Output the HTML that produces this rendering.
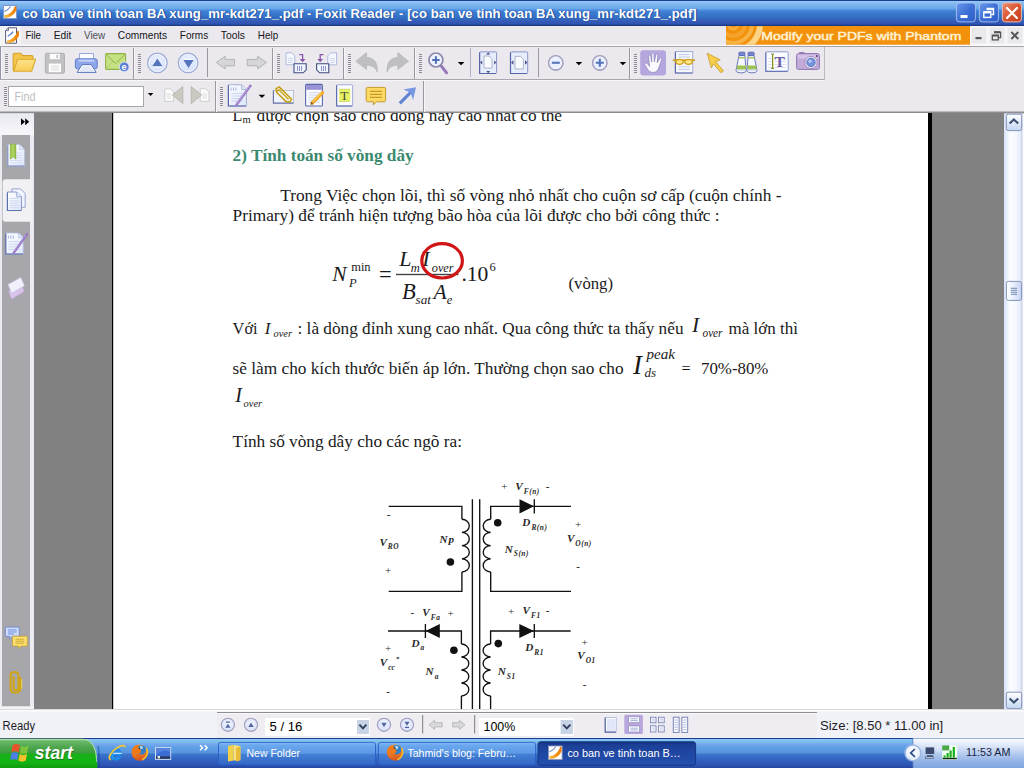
<!DOCTYPE html>
<html lang="vi">
<head>
<meta charset="utf-8">
<title>co ban ve tinh toan BA xung_mr-kdt271_.pdf - Foxit Reader</title>
<style>
html,body{margin:0;padding:0;}
body{width:1024px;height:768px;overflow:hidden;position:relative;background:#eceaee;font-family:"Liberation Sans",sans-serif;font-size:11px;color:#000;}
#root *{position:absolute;box-sizing:border-box;}
#root{position:absolute;left:0;top:0;width:1024px;height:768px;overflow:hidden;}
/* title bar */
#title{left:0;top:0;width:1024px;height:26px;background:linear-gradient(180deg,#16408c 0,#16408c 0.8px,#9cc8fc 1.3px,#88bcf0 3px,#76b2ea 6px,#6aa8ec 8.5px,#4e8ee0 10px,#3c7cd0 12px,#3674c8 16px,#3268be 19px,#3659b8 21.5px,#2c54b0 24px,#1c3c88 25.2px,#1c3c88 26px);}
/* menubar */
#menu{left:0;top:26px;width:1024px;height:20px;background:#ebe9ed;}
/* toolbars */
#tb1{left:0;top:46px;width:825px;height:34px;border-top:1px solid #a9a7ab;border-bottom:1px solid #a9a7ab;border-right:1px solid #bdbbbf;background:#ebe9ed;}
#tb2{left:0;top:80px;width:1024px;height:33px;background:#ebe9ed;}
/* doc */
#doc{left:0;top:113px;width:1024px;height:596px;background:#818181;overflow:hidden;}
#page{left:113px;top:0;width:815px;height:596px;background:#fff;}
</style>
</head>
<body>
<div id="root">

<!-- ===== TITLE BAR ===== -->
<div id="title">
</div>

<!-- ===== MENU BAR ===== -->
<div id="menu">
</div>

<!-- ===== TOOLBARS ===== -->
<div id="tb1"></div>
<div id="tb2"></div>

<!--CHROME-START-->
<svg id="chrome" style="left:0;top:0" width="1024" height="114" viewBox="0 0 1024 114">
<defs>
  <linearGradient id="gBtn" x1="0" y1="0" x2="1" y2="1"><stop offset="0" stop-color="#6a9aec"/><stop offset="0.5" stop-color="#3e70d6"/><stop offset="1" stop-color="#2c5cc6"/></linearGradient>
  <linearGradient id="gCls" x1="0" y1="0" x2="1" y2="1"><stop offset="0" stop-color="#ec8f74"/><stop offset="0.5" stop-color="#d9532f"/><stop offset="1" stop-color="#c03c1c"/></linearGradient>
  <radialGradient id="gCirc" cx="0.5" cy="0.4" r="0.6"><stop offset="0" stop-color="#eef3ff"/><stop offset="1" stop-color="#cfdcfa"/></radialGradient>
  <linearGradient id="gFold" x1="0" y1="0" x2="0" y2="1"><stop offset="0" stop-color="#fde28a"/><stop offset="1" stop-color="#f8cc58"/></linearGradient>
  <linearGradient id="gPg" x1="0" y1="0" x2="1" y2="1"><stop offset="0" stop-color="#ffffff"/><stop offset="1" stop-color="#dfe8fb"/></linearGradient>
  <linearGradient id="gOr" x1="0" y1="1" x2="1" y2="0"><stop offset="0" stop-color="#f6c050"/><stop offset="0.5" stop-color="#f09010"/><stop offset="1" stop-color="#e87808"/></linearGradient>
</defs>

<!-- title + menu text -->
<g font-family="'Liberation Sans',sans-serif">
  <text x="23.4" y="18.4" font-weight="bold" font-size="13" fill="#12307a" opacity="0.75" textLength="674.3" lengthAdjust="spacingAndGlyphs">co ban ve tinh toan BA xung_mr-kdt271_.pdf - Foxit Reader - [co ban ve tinh toan BA xung_mr-kdt271_.pdf]</text>
  <text x="22.5" y="17.5" font-weight="bold" font-size="13" fill="#fff" textLength="674.3" lengthAdjust="spacingAndGlyphs">co ban ve tinh toan BA xung_mr-kdt271_.pdf - Foxit Reader - [co ban ve tinh toan BA xung_mr-kdt271_.pdf]</text>
  <g font-size="11.5" fill="#15151c">
    <text x="25.4" y="38.8" textLength="15.6" lengthAdjust="spacingAndGlyphs">File</text>
    <text x="53.8" y="38.8" textLength="17.6" lengthAdjust="spacingAndGlyphs">Edit</text>
    <text x="84" y="38.8" textLength="21.2" lengthAdjust="spacingAndGlyphs" fill="#4c4c55">View</text>
    <text x="117.8" y="38.8" textLength="49.2" lengthAdjust="spacingAndGlyphs">Comments</text>
    <text x="179.8" y="38.8" textLength="28.4" lengthAdjust="spacingAndGlyphs">Forms</text>
    <text x="220.8" y="38.8" textLength="24.2" lengthAdjust="spacingAndGlyphs">Tools</text>
    <text x="257.8" y="38.8" textLength="20.4" lengthAdjust="spacingAndGlyphs">Help</text>
  </g>
</g>
<!-- title icon -->
<g>
  <rect x="3.5" y="5.5" width="13" height="13" fill="#fff" stroke="#7f97cf" stroke-width="1"/>
  <path d="M4.2 15 C8.8 15.2 13.2 11.4 14.8 6.2 L16.3 6.2 L16.3 10.6 C14 15.2 9.4 18.2 4.4 17.9 Z" fill="url(#gOr)"/>
  <path d="M4.2 11.5 C6.5 10.5 9 9 10.5 6.5" fill="none" stroke="#7890c8" stroke-width="1.2"/>
</g>
<!-- title buttons -->
<g>
  <rect x="956.4" y="2.9" width="19" height="19" rx="3" fill="url(#gBtn)" stroke="#b4caf4" stroke-opacity="0.8" stroke-width="1"/>
  <rect x="960.5" y="15" width="7" height="3" fill="#fff"/>
  <rect x="979.4" y="2.9" width="19" height="19" rx="3" fill="url(#gBtn)" stroke="#b4caf4" stroke-opacity="0.8" stroke-width="1"/>
  <path d="M986.5 8.5 H993.5 V14.5 H991.5 M986.5 9.5 H993.5" fill="none" stroke="#fff" stroke-width="1.4"/>
  <rect x="983.8" y="11.8" width="7" height="5.6" fill="#3a6cd8" stroke="#fff" stroke-width="1.4"/>
  <path d="M983.8 12.6 H990.8" stroke="#fff" stroke-width="1.6"/>
  <rect x="1002.4" y="2.9" width="19" height="19" rx="3" fill="url(#gCls)" stroke="#eab9aa" stroke-width="1"/>
  <path d="M1007 8 L1017 18 M1017 8 L1007 18" stroke="#fff" stroke-width="2.2" stroke-linecap="round"/>
</g>

<rect x="0" y="44.6" width="1024" height="1.6" fill="#fbfbfd"/>
<rect x="0" y="46" width="1024" height="1" fill="#a5a3a8"/>
<!-- menu icon -->
<g>
  <rect x="0" y="26" width="21" height="19" fill="#f4f3f6"/>
  <path d="M8.5 27.8 H16.5 V43.2 H5.6 V30.6 Z" fill="#fff" stroke="#565c78" stroke-width="1"/>
  <path d="M5.6 30.6 H8.5 V27.8" fill="none" stroke="#565c78" stroke-width="0.8"/>
  <path d="M6.8 40.4 C11.6 40.4 15.8 36.6 17.4 30.8 L18.9 31.2 L19 35.6 C17 40.6 12 43.6 7 43.3 Z" fill="url(#gOr)"/>
  <path d="M7.8 36.3 C9 34.5 11 35.5 13 31.6" fill="none" stroke="#5878c8" stroke-width="1.3"/>
</g>

<!-- banner -->
<g>
  <rect x="964" y="26" width="60" height="19" fill="#f6f6f8"/>
  <rect x="726" y="26" width="244" height="18.7" fill="#f2920c"/>
  <clipPath id="cpB"><rect x="726" y="26.3" width="40" height="18.4"/></clipPath>
  <g clip-path="url(#cpB)" fill="none">
    <circle cx="733" cy="24" r="27" stroke="#fbd98c" stroke-width="6" opacity="0.95"/>
    <circle cx="733" cy="24" r="19" stroke="#f7b64a" stroke-width="4" opacity="0.9"/>
    <circle cx="733" cy="24" r="12" stroke="#f5a530" stroke-width="4" opacity="0.9"/>
    <circle cx="733" cy="24" r="5" stroke="#f7b64a" stroke-width="3" opacity="0.8"/>
  </g>
  <text x="761.3" y="39.6" font-family="'Liberation Sans',sans-serif" font-size="10.6" fill="#fff1d2" stroke="#fff1d2" stroke-width="0.45" textLength="200" lengthAdjust="spacingAndGlyphs">Modify your PDFs with Phantom</text>
</g>
<!-- MDI buttons -->
<g>
  <rect x="971.5" y="27.5" width="15" height="16" fill="#e9e8eb"/>
  <rect x="989.5" y="27.5" width="15" height="16" fill="#e9e8eb"/>
  <rect x="1007.5" y="27.5" width="15" height="16" fill="#e9e8eb"/>
  <rect x="975.5" y="37" width="6" height="2.2" fill="#555"/>
  <path d="M994 32.6 H1000.6 V37.6 H999" fill="none" stroke="#555" stroke-width="1.3"/>
  <path d="M994 31.9 H1000.6" stroke="#555" stroke-width="1.6"/>
  <rect x="992.3" y="35.3" width="6" height="4.6" fill="#e9e8eb" stroke="#555" stroke-width="1.3"/>
  <path d="M992.3 35.6 H998.3" stroke="#555" stroke-width="1.8"/>
  <path d="M1011.3 32 L1018.3 39 M1018.3 32 L1011.3 39" stroke="#555" stroke-width="1.9"/>
</g>
<rect x="0" y="111.5" width="1024" height="1.6" fill="#8c8c8e"/>
<!-- ===== toolbar 1 icons ===== -->
<rect x="0" y="80" width="825" height="1" fill="#f8f8fa"/>
<rect x="0" y="47" width="1" height="32" fill="#9494a6"/>
<rect x="1" y="47" width="1" height="32" fill="#f8f8fa"/>
<g id="tb1i">
  <!-- grips -->
  <g fill="#8f8d93">
    <path d="M5 54h3v1h-3zM5 56h3v1h-3zM5 58h3v1h-3zM5 60h3v1h-3zM5 62h3v1h-3zM5 64h3v1h-3zM5 66h3v1h-3zM5 68h3v1h-3zM5 70h3v1h-3zM5 72h3v1h-3z"/>
    <path d="M138 54h3v1h-3zM138 56h3v1h-3zM138 58h3v1h-3zM138 60h3v1h-3zM138 62h3v1h-3zM138 64h3v1h-3zM138 66h3v1h-3zM138 68h3v1h-3zM138 70h3v1h-3zM138 72h3v1h-3z"/>
    <path d="M277 54h3v1h-3zM277 56h3v1h-3zM277 58h3v1h-3zM277 60h3v1h-3zM277 62h3v1h-3zM277 64h3v1h-3zM277 66h3v1h-3zM277 68h3v1h-3zM277 70h3v1h-3zM277 72h3v1h-3z"/>
    <path d="M348 54h3v1h-3zM348 56h3v1h-3zM348 58h3v1h-3zM348 60h3v1h-3zM348 62h3v1h-3zM348 64h3v1h-3zM348 66h3v1h-3zM348 68h3v1h-3zM348 70h3v1h-3zM348 72h3v1h-3z"/>
    <path d="M419 54h3v1h-3zM419 56h3v1h-3zM419 58h3v1h-3zM419 60h3v1h-3zM419 62h3v1h-3zM419 64h3v1h-3zM419 66h3v1h-3zM419 68h3v1h-3zM419 70h3v1h-3zM419 72h3v1h-3z"/>
    <path d="M634 54h3v1h-3zM634 56h3v1h-3zM634 58h3v1h-3zM634 60h3v1h-3zM634 62h3v1h-3zM634 64h3v1h-3zM634 66h3v1h-3zM634 68h3v1h-3zM634 70h3v1h-3zM634 72h3v1h-3z"/>
  </g>
  <!-- separators -->
  <g fill="#9a989e">
    <rect x="133" y="48" width="1" height="31"/>
    <rect x="207" y="48" width="1" height="29"/>
    <rect x="272" y="48" width="1" height="31"/>
    <rect x="343" y="48" width="1" height="31"/>
    <rect x="414" y="48" width="1" height="31"/>
    <rect x="538" y="48" width="1" height="29"/>
    <rect x="629" y="48" width="1" height="31"/>
  </g>
  <rect x="470" y="48" width="1" height="29" fill="#b4b0c8"/>
  <g fill="#f6f6f8">
    <rect x="134" y="48" width="1" height="31"/><rect x="273" y="48" width="1" height="31"/><rect x="344" y="48" width="1" height="31"/><rect x="415" y="48" width="1" height="31"/><rect x="630" y="48" width="1" height="31"/>
  </g>

  <!-- folder -->
  <path d="M13.2 70.5 V54.8 Q13.2 53.3 14.7 53.3 H20.6 L22.8 55.6 H31.5 Q33 55.6 33 57.1 V59.3" fill="#f5c64e" stroke="#d3a224" stroke-width="1.1"/>
  <path d="M13.6 71.3 L17.6 59.3 H35.6 L31.6 71.3 Z" fill="url(#gFold)" stroke="#d9a928" stroke-width="1.1" stroke-linejoin="round"/>
  <!-- floppy (disabled) -->
  <rect x="45.3" y="53.3" width="19.2" height="19.9" rx="1.5" fill="#c1c1c3" stroke="#b1b1b3" stroke-width="1"/>
  <rect x="49.8" y="53.8" width="10" height="5.4" fill="#fdfdfd"/>
  <rect x="56.3" y="54.8" width="1.8" height="3.4" fill="#c2c2c4"/>
  <rect x="48.8" y="63.6" width="12.2" height="8.6" fill="#fdfdfd"/>
  <path d="M51 66 H59 M51 68 H59 M51 70 H59" stroke="#d2d2d4" stroke-width="0.8"/>
  <!-- printer -->
  <rect x="79.6" y="53.6" width="13.8" height="6" fill="#fdfdff" stroke="#8e9fd6" stroke-width="0.9"/>
  <rect x="75.4" y="58.8" width="21.8" height="10" rx="2" fill="#8ea7ea" stroke="#607cc9" stroke-width="1"/>
  <rect x="78.5" y="59.6" width="15.6" height="2" fill="#c4d2f6"/>
  <path d="M82 64.6 H91.2 L96.2 72.4 H77.2 Z" fill="#fbfcff" stroke="#5a74c0" stroke-width="1"/>
  <path d="M82.2 67 H91 M81 69 H92.2 M80 71 H93.4" stroke="#b9c4e6" stroke-width="0.7"/>
  <!-- envelope -->
  <rect x="105.6" y="53.6" width="20" height="15.8" rx="1.2" fill="#c6e184" stroke="#8fb347" stroke-width="1.1"/>
  <path d="M106.2 54.4 L115.6 63.6 L125 54.4" fill="none" stroke="#8fb347" stroke-width="1"/>
  <path d="M106.2 68.8 L112.8 61.2 M125 68.8 L118.4 61.2" fill="none" stroke="#a6c864" stroke-width="0.8"/>
  <circle cx="124.2" cy="66.9" r="4.9" fill="#5b80d2" stroke="#e8eefc" stroke-width="0.8"/>
  <text x="121.6" y="69.6" font-family="'Liberation Sans',sans-serif" font-weight="bold" font-size="9" fill="#fff">e</text>

  <!-- up / down -->
  <circle cx="157.4" cy="62.9" r="9.8" fill="url(#gCirc)" stroke="#9eacd6" stroke-width="1.2"/>
  <circle cx="157.4" cy="62.9" r="8.4" fill="none" stroke="#f4f7ff" stroke-width="1"/>
  <path d="M152.3 66.3 H162.4 L157.35 58.4 Z" fill="#5373bb"/>
  <path d="M152.3 67.1 H162.4" stroke="#fff" stroke-width="0.9"/>
  <circle cx="188.1" cy="62.9" r="9.8" fill="url(#gCirc)" stroke="#9eacd6" stroke-width="1.2"/>
  <circle cx="188.1" cy="62.9" r="8.4" fill="none" stroke="#f4f7ff" stroke-width="1"/>
  <path d="M183.4 60 H193.6 L188.5 68 Z" fill="#5373bb"/>
  <path d="M183.4 59.3 H193.6" stroke="#fff" stroke-width="0.9"/>

  <!-- back / forward (disabled) -->
  <path d="M216.3 62.5 L225.2 56.2 V59.4 H234.6 V65.8 H225.2 V68.9 Z" fill="#d6d6d8" stroke="#b3b3b7" stroke-width="1" stroke-linejoin="round"/>
  <path d="M266.5 62.5 L257.6 56.2 V59.4 H247.2 V65.8 H257.6 V68.9 Z" fill="#d6d6d8" stroke="#b3b3b7" stroke-width="1" stroke-linejoin="round"/>

  <!-- rotate icons -->
  <g>
    <path d="M286 52.8 H291.8 L294.8 55.8 V64.8 H286 Z" fill="#f4f7ff" stroke="#a9b4da" stroke-width="0.9"/>
    <path d="M288 58.5 H292.8 M288 60.5 H292.8 M288 62.5 H292.8" stroke="#c1cae6" stroke-width="0.7"/>
    <path d="M294 63.8 H306.2 V69.8 L303.2 72.8 H294 Z" fill="#f1f5ff" stroke="#3f4d80" stroke-width="1.1"/>
    <path d="M297.5 66 V71 M299.5 66 V71 M301.5 66 V71" stroke="#6f7cb0" stroke-width="0.8"/>
    <path d="M299.3 54.6 H302.6 V60" fill="none" stroke="#8755ab" stroke-width="1.3"/>
    <path d="M299.8 59 H305.4 L302.6 62.3 Z" fill="#8755ab"/>
  </g>
  <g>
    <path d="M336.6 52.8 H330.8 L327.8 55.8 V64.8 H336.6 Z" fill="#f4f7ff" stroke="#a9b4da" stroke-width="0.9"/>
    <path d="M330 58.5 H334.8 M330 60.5 H334.8 M330 62.5 H334.8" stroke="#c1cae6" stroke-width="0.7"/>
    <path d="M328.8 63.8 H316.6 V69.8 L319.6 72.8 H328.8 Z" fill="#f1f5ff" stroke="#3f4d80" stroke-width="1.1"/>
    <path d="M321.5 66 V71 M323.5 66 V71 M325.5 66 V71" stroke="#6f7cb0" stroke-width="0.8"/>
    <path d="M323.5 54.6 H320.2 V60" fill="none" stroke="#8755ab" stroke-width="1.3"/>
    <path d="M317.4 59 H323 L320.2 62.3 Z" fill="#8755ab"/>
  </g>

  <!-- undo / redo (disabled) -->
  <path d="M355.8 61.3 L366.6 52.6 V57.4 C373.5 57.4 378.2 62.5 377.2 72 C375.6 67.4 372.2 65.2 366.6 65.2 V69.6 Z" fill="#bfbfc1" stroke="#b0b0b3" stroke-width="0.6"/>
  <path d="M408.6 61.3 L397.8 52.6 V57.4 C390.9 57.4 386.2 62.5 387.2 72 C388.8 67.4 392.2 65.2 397.8 65.2 V69.6 Z" fill="#bfbfc1" stroke="#b0b0b3" stroke-width="0.6"/>

  <!-- zoom tool -->
  <path d="M441 65.6 L446.6 72.8" stroke="#9479bb" stroke-width="3" stroke-linecap="round"/>
  <circle cx="435.9" cy="60" r="7" fill="#edf2ff" stroke="#8c88a9" stroke-width="1.7"/>
  <path d="M432.2 60 H439.6 M435.9 56.3 V63.7" stroke="#4d6fb5" stroke-width="2"/>
  <path d="M457.8 62 H464.4 L461.1 65.3 Z" fill="#000"/>

  <!-- fit page / fit width -->
  <rect x="479.6" y="51.9" width="17" height="21.6" rx="1" fill="#e6edfd" stroke="#8a94c8" stroke-width="1"/>
  <path d="M479.6 52.4 V73.5 H496" fill="none" stroke="#5b64a4" stroke-width="1.2"/>
  <path d="M484 56 H489 L492 59 V68 H484 Z" fill="#fafbff" stroke="#a8acc4" stroke-width="0.9"/>
  <path d="M488.2 52.2 L486.2 54.4 H490.2 Z M488.2 73.2 L486.2 71 H490.2 Z M480 62.5 L482.2 60.5 V64.5 Z M496.4 62.5 L494.2 60.5 V64.5 Z" fill="#474f86"/>
  <rect x="510.5" y="51.9" width="17.2" height="21.6" rx="1" fill="#e6edfd" stroke="#8a94c8" stroke-width="1"/>
  <path d="M510.5 52.4 V73.5 H527" fill="none" stroke="#5b64a4" stroke-width="1.2"/>
  <path d="M515 56.4 H520.4 L523.4 59.4 V69 H515 Z" fill="#fafbff" stroke="#a8acc4" stroke-width="0.9"/>
  <path d="M511 62.5 L513.4 60.3 V64.7 Z M527.4 62.5 L525 60.3 V64.7 Z" fill="#474f86"/>

  <!-- zoom out / in -->
  <circle cx="555.8" cy="63.3" r="7.6" fill="#b9b4cc"/>
  <circle cx="555.8" cy="62.8" r="7.2" fill="#ebf0ff" stroke="#a19cba" stroke-width="1.3"/>
  <rect x="551.8" y="61.7" width="8" height="2.1" fill="#5373bb"/>
  <path d="M575.6 62 H582.2 L578.9 65.3 Z" fill="#000"/>
  <circle cx="599.8" cy="63.3" r="7.6" fill="#b9b4cc"/>
  <circle cx="599.8" cy="62.8" r="7.2" fill="#ebf0ff" stroke="#a19cba" stroke-width="1.3"/>
  <path d="M595.8 62.8 H603.8 M599.8 58.8 V66.8" stroke="#5373bb" stroke-width="2.1"/>
  <path d="M619.6 62 H626.2 L622.9 65.3 Z" fill="#000"/>

  <!-- hand tool (selected) -->
  <rect x="640.2" y="50.2" width="25.8" height="25.2" rx="3" fill="#b6a6de"/>
  <path d="M644.2 63.6 C645.2 62.4 646.8 62.8 647.8 64.2 L649.6 66.4 L648.6 56.2 C648.5 54.6 650.4 54.4 650.7 56 L651.8 62 L651.7 53.8 C651.7 52.2 653.8 52.2 653.9 53.8 L654.4 61.8 L655.7 55 C656 53.6 657.9 53.9 657.8 55.4 L657.2 62.8 L659.9 58.4 C660.7 57.2 662.2 58 661.7 59.4 L658.8 67.6 C657.9 70.4 656.4 72.4 653.4 72.4 C650.8 72.4 649.2 71.4 647.6 69.2 Z" fill="#fbfbff" stroke="#8d82b8" stroke-width="0.7"/>

  <!-- read mode (glasses) -->
  <rect x="675.4" y="51.6" width="17.4" height="21.4" fill="#f4f7ff" stroke="#98a4d0" stroke-width="0.9"/>
  <path d="M675.4 52 V73 H692.4" fill="none" stroke="#5a68a8" stroke-width="1.2"/>
  <path d="M678.6 54.6 H689.6 M678.6 57 H689.6 M678.6 66.8 H689.6 M678.6 69.4 H689.6" stroke="#b4c0e4" stroke-width="0.8"/>
  <path d="M672.8 60.2 H695" stroke="#c99c18" stroke-width="1.6"/>
  <ellipse cx="679.6" cy="61.8" rx="3.7" ry="2.5" fill="#fde68a" stroke="#cf9f1a" stroke-width="1.3"/>
  <ellipse cx="688.6" cy="61.8" rx="3.7" ry="2.5" fill="#fde68a" stroke="#cf9f1a" stroke-width="1.3"/>

  <!-- select arrow -->
  <path d="M707.2 53.2 L720.2 59.8 L715.6 61.8 L723.4 70.8 L721 72.8 L713.4 63.8 L711.4 68 Z" fill="#f6ce4c" stroke="#c9a233" stroke-width="0.9" stroke-linejoin="round"/>

  <!-- binoculars -->
  <g stroke="#5a6ab2" stroke-width="0.9">
    <path d="M739 55.4 H744.8 L746.2 70.6 C746.2 73.6 736 73.6 736 70.6 Z" fill="#f6f9ff"/>
    <path d="M748.2 55.4 H754 L757 70.6 C757 73.6 747 73.6 747 70.6 Z" fill="#f6f9ff"/>
    <rect x="738.9" y="52.2" width="6" height="3.4" rx="0.8" fill="#7585cf"/>
    <rect x="748.1" y="52.2" width="6" height="3.4" rx="0.8" fill="#7585cf"/>
  </g>
  <path d="M738.8 57 H745 V58.6 H738.6 Z M748.2 57 H754.4 L754.7 58.6 H748.1 Z" fill="#a7c85c"/>
  <path d="M737.2 65.6 H745.8 L746 69.6 H736.6 Z M747.6 65.6 H756 L756.7 69.6 H747.3 Z" fill="#9dc352"/>
  <path d="M736.6 70.4 H745.8 M747.4 70.4 H756.6" stroke="#cfdcf8" stroke-width="1.4"/>

  <!-- text select -->
  <rect x="765.8" y="51.8" width="22.4" height="19.6" rx="1" fill="#fbfcff" stroke="#8f9ccf" stroke-width="1"/>
  <path d="M765.8 52.4 V71.4 H787.6" fill="none" stroke="#6878b8" stroke-width="1.1"/>
  <path d="M768 58.5 H786 M768 61.5 H786 M768 64.5 H786 M768 67.5 H786" stroke="#d0d8f0" stroke-width="0.7"/>
  <path d="M772.6 54.4 V68.2 M771.2 54.2 H774 M771.2 68.4 H774" stroke="#6a7a2a" stroke-width="1"/>
  <path d="M773.4 55 V68" stroke="#f0e870" stroke-width="0.8"/>
  <text x="774.6" y="67" font-family="'Liberation Serif',serif" font-weight="bold" font-size="15.5" fill="#6a5aa0">T</text>

  <!-- snapshot camera -->
  <rect x="799" y="51.9" width="5.6" height="2.6" rx="0.6" fill="#9a82ba"/>
  <rect x="796.6" y="53.6" width="22.8" height="15.8" rx="2" fill="#c3abd9" stroke="#8e76b0" stroke-width="1"/>
  <rect x="797.6" y="54.6" width="20.8" height="4" fill="#d9c8ea" opacity="0.8"/>
  <circle cx="811" cy="62.4" r="6.1" fill="#f4f0fb" stroke="#9a86bc" stroke-width="0.9"/>
  <circle cx="811" cy="62.4" r="4.3" fill="#7494dc" stroke="#5670b8" stroke-width="0.8"/>
  <circle cx="810" cy="61.2" r="1.6" fill="#b9ccf4"/>
  <circle cx="816.8" cy="56" r="1" fill="#4a3a68"/>
</g>

<!-- ===== toolbar 2 ===== -->
<g id="tb2i">
  <g fill="#8f8d93">
    <path d="M4 87h3v1h-3zM4 89h3v1h-3zM4 91h3v1h-3zM4 93h3v1h-3zM4 95h3v1h-3zM4 97h3v1h-3zM4 99h3v1h-3zM4 101h3v1h-3zM4 103h3v1h-3zM4 105h3v1h-3z"/>
    <path d="M220 87h3v1h-3zM220 89h3v1h-3zM220 91h3v1h-3zM220 93h3v1h-3zM220 95h3v1h-3zM220 97h3v1h-3zM220 99h3v1h-3zM220 101h3v1h-3zM220 103h3v1h-3zM220 105h3v1h-3z"/>
  </g>
  <rect x="215" y="81" width="1" height="31" fill="#9a989e"/>
  <rect x="216" y="81" width="1" height="31" fill="#f6f6f8"/>
  <rect x="423" y="81" width="1" height="31" fill="#9a989e"/>
  <rect x="424" y="81" width="1" height="31" fill="#f6f6f8"/>
  <!-- find box -->
  <rect x="8.5" y="86.5" width="135" height="20" fill="#fff" stroke="#a7a7ab" stroke-width="1"/>
  <text x="14.4" y="101.2" font-family="'Liberation Sans',sans-serif" font-size="12.5" fill="#bdbdc1" textLength="21" lengthAdjust="spacingAndGlyphs">Find</text>
  <path d="M147.8 93 H153.4 L150.6 95.9 Z" fill="#000"/>
  <!-- find prev / next (disabled) -->
  <path d="M164.8 88.8 H170.4 L173.6 92 V101.4 H164.8 Z" fill="#fbfbfb" stroke="#c9c9c9" stroke-width="0.9"/>
  <path d="M166.4 94 H171 M166.4 96 H171 M166.4 98 H171" stroke="#d6d6d6" stroke-width="0.8"/>
  <path d="M172.4 95 L182.8 86.6 V103.6 Z" fill="#cacac3" stroke="#b4b4ad" stroke-width="0.9" stroke-linejoin="round"/>
  <path d="M200.2 88.8 H205.8 L209 92 V101.4 H200.2 Z" fill="#fbfbfb" stroke="#c9c9c9" stroke-width="0.9"/>
  <path d="M202.4 94 H207 M202.4 96 H207 M202.4 98 H207" stroke="#d6d6d6" stroke-width="0.8"/>
  <path d="M201.6 95 L191.2 86.6 V103.6 Z" fill="#cacac3" stroke="#b4b4ad" stroke-width="0.9" stroke-linejoin="round"/>

  <!-- doc + pen -->
  <path d="M228.4 84.8 H241.6 L246.4 89.6 V106 H228.4 Z" fill="url(#gPg)" stroke="#9aa6d4" stroke-width="0.9"/>
  <path d="M228.4 85.2 V106 H246" fill="none" stroke="#5767a8" stroke-width="1.2"/>
  <path d="M241.6 84.8 V89.6 H246.4" fill="#dfe6fa" stroke="#9aa6d4" stroke-width="0.7"/>
  <path d="M231 87.4 V90.6 M233.4 87.4 V90.6 M235.8 87.4 V90.6" stroke="#9fb0e0" stroke-width="1"/>
  <path d="M231 93.4 H243 M231 96 H243 M231 98.6 H243 M231 101.2 H243" stroke="#bfcaee" stroke-width="0.8"/>
  <path d="M250.4 85.8 L236.6 104.6" stroke="#9a7cc4" stroke-width="2.6" stroke-linecap="round"/>
  <path d="M249.4 86.2 L236.4 104.2" stroke="#c9b4e6" stroke-width="0.8"/>
  <path d="M258.6 94.8 H265.2 L261.9 98.1 Z" fill="#000"/>

  <!-- attach file -->
  <rect x="273.4" y="90.4" width="20.2" height="12.8" fill="#f1f3fb" stroke="#b4b4c0" stroke-width="0.8"/>
  <path d="M273.4 90.6 V103.2 H293.4" fill="none" stroke="#6d78b2" stroke-width="1.2"/>
  <g fill="none" stroke="#c39c10" stroke-width="1.5" stroke-linejoin="round">
    <path d="M276 88.6 L279.4 87 L291.6 99.2 L290 102 L286 101.6 L276.6 92.2 Z"/>
    <path d="M278.6 89.4 L288.6 99.4 M277 91 L280.6 89.4"/>
  </g>
  <path d="M278 88.4 L290 100.4" stroke="#f0dc78" stroke-width="0.8"/>

  <!-- note -->
  <rect x="305.6" y="84.4" width="16.8" height="21.6" rx="1" fill="#fbfcff" stroke="#5868a8" stroke-width="1.1"/>
  <rect x="306.2" y="85" width="15.6" height="4.8" fill="#9a92d6"/>
  <path d="M308.4 92.6 H319.6 M308.4 95 H319.6 M308.4 97.4 H319.6 M308.4 99.8 H319.6 M308.4 102.2 H319.6" stroke="#c3cdec" stroke-width="0.8"/>
  <path d="M322.4 92.8 L312.4 102.8" stroke="#f0a51f" stroke-width="3.4" stroke-linecap="round"/>
  <path d="M322 92.4 L312.6 101.8" stroke="#fbd36c" stroke-width="1.1"/>
  <path d="M310.4 104.8 L311 101.6 L313.6 104.2 Z" fill="#8a5a22"/>

  <!-- typewriter T -->
  <rect x="336.6" y="84.8" width="16" height="21.2" rx="0.8" fill="#fbfcff" stroke="#98a4d4" stroke-width="0.9"/>
  <path d="M336.6 85.2 V106 H352.2" fill="none" stroke="#5f6fb0" stroke-width="1.2"/>
  <rect x="339.2" y="89.2" width="11" height="12.4" fill="#e4f263"/>
  <path d="M339.2 89.2 H350.2 M339.2 101.6 H350.2" stroke="#9aae30" stroke-width="0.7" stroke-dasharray="1.2 1"/>
  <text x="340.2" y="100.2" font-family="'Liberation Serif',serif" font-size="13.5" fill="#4a4a38">T</text>

  <!-- comment -->
  <path d="M367.6 87.4 H384.2 Q385.6 87.4 385.6 88.8 V100.4 Q385.6 101.8 384.2 101.8 H376.6 L373.2 104.8 L373.6 101.8 H367.6 Q366.2 101.8 366.2 100.4 V88.8 Q366.2 87.4 367.6 87.4 Z" fill="#fcd964" stroke="#c39a2c" stroke-width="1"/>
  <path d="M370 91.4 H382 M370 94.4 H382 M370 97.4 H382" stroke="#c89c22" stroke-width="1.2"/>

  <!-- arrow -->
  <path d="M399.8 103.4 L412 91" stroke="#6283d4" stroke-width="3.2"/>
  <path d="M403.2 89.6 L416 87.2 L413 100.2 L410.6 92.6 Z" fill="#7797e4"/>
</g>

</svg>
<!--CHROME-END-->

<!-- ===== DOCUMENT AREA ===== -->
<div id="doc">
  <div id="page"></div>
  <svg id="docsvg" style="left:0;top:-113px" width="1024" height="768" viewBox="0 0 1024 768">
    <!--DOCCHROME-START-->
    <defs>
      <linearGradient id="gTrack" x1="0" y1="0" x2="1" y2="0"><stop offset="0" stop-color="#d6e2fa"/><stop offset="0.35" stop-color="#fbfcff"/><stop offset="0.7" stop-color="#f3f6fe"/><stop offset="1" stop-color="#dfe7f9"/></linearGradient>
      <linearGradient id="gSB" x1="0" y1="0" x2="0" y2="1"><stop offset="0" stop-color="#ffffff"/><stop offset="0.45" stop-color="#e4edfb"/><stop offset="1" stop-color="#c3d6f2"/></linearGradient>
      <linearGradient id="gTh" x1="0" y1="0" x2="1" y2="0"><stop offset="0" stop-color="#ffffff"/><stop offset="0.5" stop-color="#e6edfc"/><stop offset="1" stop-color="#c6d2f3"/></linearGradient>
      <linearGradient id="gNavH" x1="0" y1="0" x2="0" y2="1"><stop offset="0" stop-color="#e9e9f1"/><stop offset="1" stop-color="#f7f7fb"/></linearGradient>
      <linearGradient id="gRib" x1="0" y1="0" x2="1" y2="0"><stop offset="0" stop-color="#8fbf3a"/><stop offset="0.5" stop-color="#b5d86a"/><stop offset="1" stop-color="#86b533"/></linearGradient>
    </defs>
    <!-- page borders -->
    <rect x="112" y="113" width="1.2" height="596" fill="#000"/>
    <rect x="928" y="113" width="4" height="596" fill="#000"/>
        <!-- nav panel -->
    <rect x="0" y="113.4" width="34" height="596" fill="#ebebf1"/>
    <rect x="0" y="113.4" width="34" height="21.6" fill="url(#gNavH)"/>
    <path d="M21 118.2 L25 121.7 L21 125.2 Z M25.2 118.2 L29.2 121.7 L25.2 125.2 Z" fill="#000"/>
    <rect x="2" y="135" width="28" height="571.5" fill="#a7a7ab"/>
    <rect x="0" y="706.5" width="34" height="2.5" fill="#f3f3f7"/>
    <path d="M5.5 179.2 H31.8 V221.8 H5.5 Q2.6 221.8 2.6 218.8 V182.2 Q2.6 179.2 5.5 179.2 Z" fill="#f1f0f3"/>
    <!-- bookmark icon -->
    <path d="M7.8 144.6 H19.6 L24.4 149.4 V166 H7.8 Z" fill="url(#gPg)" stroke="#b9c4e6" stroke-width="0.8"/>
    <path d="M7.8 145 V166 H24" fill="none" stroke="#7f8fc4" stroke-width="1"/>
    <path d="M19.6 144.6 V149.4 H24.4" fill="#e4eafb" stroke="#b9c4e6" stroke-width="0.7"/>
    <path d="M10 153 H22 M10 155.5 H22 M10 158 H22 M10 160.5 H22 M10 163 H22" stroke="#cdd6f0" stroke-width="0.7"/>
    <path d="M10.3 144.2 H15.9 V159.2 L13.1 156.6 L10.3 159.2 Z" fill="url(#gRib)" stroke="#7ea82e" stroke-width="0.5"/>
    <!-- pages icon -->
    <path d="M11.9 188.9 H20.6 L25.2 193.5 V207.3 H11.9 Z" fill="#f0f4ff" stroke="#8e9dcc" stroke-width="0.9"/>
    <path d="M7.4 192 H16.6 L21.4 196.8 V210.5 H7.4 Z" fill="url(#gPg)" stroke="#7d8cc0" stroke-width="0.9"/>
    <path d="M7.4 192.4 V210.5 H21" fill="none" stroke="#5d6eae" stroke-width="1.1"/>
    <path d="M16.6 192 V196.8 H21.4" fill="#e4eafb" stroke="#8e9dcc" stroke-width="0.7"/>
    <path d="M9.6 198.5 H19 M9.6 200.8 H19 M9.6 203.1 H19 M9.6 205.4 H19 M9.6 207.7 H19" stroke="#c3cdec" stroke-width="0.7"/>
    <!-- signature icon -->
    <path d="M5.8 233 H18.6 L23.2 237.6 V254 H5.8 Z" fill="url(#gPg)" stroke="#b0bbdf" stroke-width="0.8"/>
    <path d="M5.8 233.4 V254 H22.8" fill="none" stroke="#5767a8" stroke-width="1.1"/>
    <path d="M18.6 233 V237.6 H23.2" fill="#dfe6fa" stroke="#b0bbdf" stroke-width="0.7"/>
    <path d="M8.4 235.4 V238.6 M10.8 235.4 V238.6 M13.2 235.4 V238.6" stroke="#9fb0e0" stroke-width="1"/>
    <path d="M8.2 241.6 H20.4 M8.2 244.2 H20.4 M8.2 246.8 H20.4 M8.2 249.4 H20.4" stroke="#c3cdec" stroke-width="0.7"/>
    <path d="M27 234 L13.8 252.6" stroke="#9373bf" stroke-width="2.4" stroke-linecap="round"/>
    <path d="M26.2 234.2 L13.8 251.8" stroke="#c9b4e6" stroke-width="0.7"/>
    <!-- layers icon -->
    <path d="M8.6 291 L21.6 284.2 L24.2 291.6 L11.4 299.2 Z" fill="#d9c3ea" stroke="#c0a6d8" stroke-width="0.6"/>
    <path d="M8 284.6 L20.8 277.4 L24.4 285.8 L11.6 293 Z" fill="#f1f1fb" stroke="#c9c4e2" stroke-width="0.6"/>
    <!-- comments icon -->
    <path d="M6.4 627 H18.2 Q19.3 627 19.3 628.1 V635.3 Q19.3 636.4 18.2 636.4 H12.4 L9.6 639 L9.8 636.4 H6.4 Q5.3 636.4 5.3 635.3 V628.1 Q5.3 627 6.4 627 Z" fill="#cbdafd" stroke="#6d86c8" stroke-width="0.9"/>
    <path d="M8 630 H16.6 M8 632 H16.6 M8 634 H14" stroke="#5f7fd0" stroke-width="0.8"/>
    <path d="M13.6 636.2 H26.2 Q27.3 636.2 27.3 637.3 V645 Q27.3 646.1 26.2 646.1 H21 L18.8 648.6 L18.6 646.1 H13.6 Q12.5 646.1 12.5 645 V637.3 Q12.5 636.2 13.6 636.2 Z" fill="#fde173" stroke="#c9a133" stroke-width="0.9"/>
    <path d="M15.4 639.2 H24.4 M15.4 641.2 H24.4 M15.4 643.2 H24.4" stroke="#c39a22" stroke-width="0.8"/>
    <!-- attachments icon -->
    <path d="M20.2 678 V689 Q20.2 692.6 15.4 692.6 Q10.6 692.6 10.6 689 V674.6 Q10.6 672 14.6 672 Q18.4 672 18.4 674.6 V688 Q18.4 690 16 690 Q13.6 690 13.6 688 V677" fill="none" stroke="#cfa516" stroke-width="2.1" stroke-linecap="round"/>
    <path d="M21.6 679 V689" stroke="#e8cc5c" stroke-width="1.1"/>
    <!-- vertical scrollbar -->
    <rect x="1004" y="113.4" width="17.6" height="596" fill="url(#gTrack)"/>
    <rect x="1021.4" y="113.4" width="1.6" height="596" fill="#e3e4f5"/>
    <rect x="1023" y="113.4" width="1" height="596" fill="#fafbff"/>
    <rect x="1006.3" y="114.2" width="15.4" height="16.4" rx="2" fill="url(#gSB)" stroke="#8291b5" stroke-width="1"/>
    <path d="M1009.6 123.6 L1013.9 119.4 L1018.2 123.6" fill="none" stroke="#3c506f" stroke-width="2.1"/>
    <rect x="1006.3" y="692.2" width="15.4" height="16.4" rx="2" fill="url(#gSB)" stroke="#8291b5" stroke-width="1"/>
    <path d="M1009.6 698.4 L1013.9 702.6 L1018.2 698.4" fill="none" stroke="#3c506f" stroke-width="2.1"/>
    <rect x="1006.4" y="281.4" width="15.2" height="19" rx="2" fill="url(#gTh)" stroke="#8493b6" stroke-width="1"/>
    <path d="M1010.8 288.3 H1017 M1010.8 290.3 H1017 M1010.8 292.3 H1017 M1010.8 294.3 H1017" stroke="#6783a5" stroke-width="0.9"/>
    <!--DOCCHROME-END-->
    <g font-family="'Liberation Serif',serif" fill="#1a1a1a" font-size="16">
      <!-- line 1 (cut by top) -->
      <text x="232.6" y="120.5">L</text>
      <text x="242.6" y="123.3" font-size="10.5">m</text>
      <text x="256.5" y="120.5" textLength="305.5" lengthAdjust="spacingAndGlyphs">được chọn sao cho dòng này cao nhất có thể</text>
      <!-- heading -->
      <text x="232.6" y="161.2" font-weight="bold" fill="#3b8a70" textLength="181" lengthAdjust="spacingAndGlyphs">2) Tính toán số vòng dây</text>
      <!-- paragraph -->
      <text x="280.2" y="200.5" textLength="501.3" lengthAdjust="spacingAndGlyphs">Trong Việc chọn lõi, thì số vòng nhỏ nhất cho cuộn sơ cấp (cuộn chính -</text>
      <text x="232.6" y="220.5" textLength="487" lengthAdjust="spacingAndGlyphs">Primary) để tránh hiện tượng bão hòa của lõi được cho bởi công thức :</text>
      <!-- formula -->
      <g font-style="italic">
        <text x="332.2" y="280.7" font-size="21.5">N</text>
        <text x="349" y="286.6" font-size="12.5">P</text>
        <text x="399.2" y="266.4" font-size="22">L</text>
        <text x="410.8" y="271.8" font-size="12.5">m</text>
        <text x="422.2" y="266.4" font-size="22">I</text>
        <text x="431.8" y="272.3" font-size="12.5" textLength="21.8" lengthAdjust="spacingAndGlyphs">over</text>
        <text x="402" y="298.6" font-size="22.5">B</text>
        <text x="415.6" y="303.6" font-size="12.5" textLength="15.4" lengthAdjust="spacingAndGlyphs">sat</text>
        <text x="433.4" y="298.6" font-size="21.5" textLength="13.2" lengthAdjust="spacingAndGlyphs">A</text>
        <text x="446.8" y="303.6" font-size="12.5">e</text>
      </g>
      <text x="351.2" y="270.6" font-size="13.5" textLength="19.4" lengthAdjust="spacingAndGlyphs">min</text>
      <text x="379" y="281.5" font-size="22.5">=</text>
      <rect x="396" y="273.8" width="62.5" height="1.4" fill="#444"/>
      <text x="461.4" y="280.6" font-size="21.5" textLength="27" lengthAdjust="spacingAndGlyphs">.10</text>
      <text x="489.4" y="270.6" font-size="12.5">6</text>
      <ellipse cx="442.1" cy="260.8" rx="20.3" ry="17.2" fill="none" stroke="#cf1515" stroke-width="3.2"/>
      <text x="568.5" y="288.8" textLength="44.5" lengthAdjust="spacingAndGlyphs">(vòng)</text>
      <!-- line 7 -->
      <text x="232.6" y="334" textLength="25" lengthAdjust="spacingAndGlyphs">Với</text>
      <text x="264.8" y="334" font-size="17" font-style="italic">I</text>
      <text x="273.5" y="337.2" font-size="10.5" font-style="italic" textLength="18.5" lengthAdjust="spacingAndGlyphs">over</text>
      <text x="297.5" y="334" textLength="386" lengthAdjust="spacingAndGlyphs">: là dòng đỉnh xung cao nhất. Qua công thức ta thấy nếu</text>
      <text x="692" y="331.5" font-size="21.5" font-style="italic">I</text>
      <text x="702.5" y="336.5" font-size="12.5" font-style="italic" textLength="20" lengthAdjust="spacingAndGlyphs">over</text>
      <text x="728.6" y="334" textLength="69.4" lengthAdjust="spacingAndGlyphs">mà lớn thì</text>
      <!-- line 8 -->
      <text x="232.6" y="374.2" textLength="391" lengthAdjust="spacingAndGlyphs">sẽ làm cho kích thước biến áp lớn. Thường chọn sao cho</text>
      <text x="633" y="373.6" font-size="27" font-style="italic">I</text>
      <text x="646.5" y="358.6" font-size="14.5" font-style="italic" textLength="28.5" lengthAdjust="spacingAndGlyphs">peak</text>
      <text x="644.5" y="376.8" font-size="13" font-style="italic">ds</text>
      <text x="681.5" y="374.2" font-size="16">=</text>
      <text x="701" y="374.2" textLength="67.4" lengthAdjust="spacingAndGlyphs">70%-80%</text>
      <!-- line 9 -->
      <text x="235.2" y="402" font-size="20" font-style="italic">I</text>
      <text x="243.6" y="406.6" font-size="11" font-style="italic" textLength="18.5" lengthAdjust="spacingAndGlyphs">over</text>
      <!-- line 10 -->
      <text x="232.6" y="447.4" textLength="229.4" lengthAdjust="spacingAndGlyphs">Tính số vòng dây cho các ngõ ra:</text>
    </g>
    <g fill="none" stroke="#111" stroke-width="1.35">
    <path d="M388.7 506.3 H461.9 V519.2"/>
    <path d="M461.9 519.2 a7.4 6.599999999999994 0 0 1 0 13.199999999999989 a7.4 6.599999999999994 0 0 1 0 13.199999999999989 a7.4 6.599999999999994 0 0 1 0 13.199999999999989 a7.4 6.599999999999994 0 0 1 0 13.199999999999989"/>
    <path d="M461.9 572 V591.4 H388.7"/>
    <path d="M472.4 499.3 V709 M479.7 499.3 V709"/>
    <path d="M571 506.3 H490.7 V519.2"/>
    <path d="M490.7 519.2 a7.5 6.599999999999994 0 0 0 0 13.199999999999989 a7.5 6.599999999999994 0 0 0 0 13.199999999999989 a7.5 6.599999999999994 0 0 0 0 13.199999999999989 a7.5 6.599999999999994 0 0 0 0 13.199999999999989"/>
    <path d="M490.7 572 V591.4 H571"/>
    <path d="M534.3 499.3 V513.4"/>
    <path d="M388 631 H461.4 V644"/>
    <path d="M461.4 644 a7.4 6.5 0 0 1 0 13.0 a7.4 6.5 0 0 1 0 13.0 a7.4 6.5 0 0 1 0 13.0 a7.4 6.5 0 0 1 0 13.0"/>
    <path d="M461.4 696 V709"/>
    <path d="M425.4 624 V638"/>
    <path d="M570.7 631 H490.6 V644"/>
    <path d="M490.6 644 a7.5 6.5 0 0 0 0 13.0 a7.5 6.5 0 0 0 0 13.0 a7.5 6.5 0 0 0 0 13.0 a7.5 6.5 0 0 0 0 13.0"/>
    <path d="M490.6 696 V709"/>
    <path d="M534.3 624 V638"/>
    </g>
    <g fill="#111">
    <path d="M519.5 499.3 L534 506.3 L519.5 513.4Z"/>
    <path d="M519.3 624 L534 631 L519.3 638Z"/>
    <path d="M439.8 624 L425.6 631 L439.8 638Z"/>
    <circle cx="450.4" cy="562" r="3.8"/>
    <circle cx="497.7" cy="522.7" r="3.8"/>
    <circle cx="453.9" cy="650.2" r="3.8"/>
    <circle cx="498.3" cy="643.6" r="3.8"/>
    </g>
    <g font-family="'Liberation Serif',serif" fill="#2a2a2a" font-style="italic" font-weight="bold" font-size="11.2">
    <text x="379.4" y="545.5">V<tspan font-size="7.4" dy="3.8" dx="1" letter-spacing="0.5">RO</tspan></text>
    <text x="439.6" y="543" letter-spacing="0.8">Np</text>
    <text x="515.3" y="490">V<tspan font-size="7.4" dy="3.8" dx="1" letter-spacing="0.5">F(n)</tspan></text>
    <text x="522.3" y="526.2">D<tspan font-size="7.4" dy="3.8" dx="1" letter-spacing="0.5">R(n)</tspan></text>
    <text x="504.7" y="552.5">N<tspan font-size="7.4" dy="3.8" dx="1" letter-spacing="0.5">S(n)</tspan></text>
    <text x="566.9" y="542">V<tspan font-size="7.4" dy="3.8" dx="1" letter-spacing="0.5">O(n)</tspan></text>
    <text x="422.3" y="616">V<tspan font-size="7.4" dy="3.8" dx="1" letter-spacing="0.5">Fa</tspan></text>
    <text x="411.4" y="646.5">D<tspan font-size="7.4" dy="3.8" dx="1" letter-spacing="0.5">a</tspan></text>
    <text x="379.8" y="665.8">V<tspan font-size="7.4" dy="3.8" dx="1">cc</tspan><tspan font-size="7" dy="-8.6" dx="1">*</tspan></text>
    <text x="425.6" y="675">N<tspan font-size="7.4" dy="3.8" dx="1" letter-spacing="0.5">a</tspan></text>
    <text x="522.6" y="614.4">V<tspan font-size="7.4" dy="3.8" dx="1" letter-spacing="0.5">F1</tspan></text>
    <text x="525.2" y="650.9">D<tspan font-size="7.4" dy="3.8" dx="1" letter-spacing="0.5">R1</tspan></text>
    <text x="497.7" y="675">N<tspan font-size="7.4" dy="3.8" dx="1" letter-spacing="0.5">S1</tspan></text>
    <text x="577.3" y="659">V<tspan font-size="7.4" dy="3.8" dx="1" letter-spacing="0.5">O1</tspan></text>
    </g>
    <g font-family="'Liberation Serif',serif" fill="#2a2a2a" font-size="11" text-anchor="middle">
    <text x="388.7" y="517.5" font-weight="bold">-</text>
    <text x="388.2" y="573.5">+</text>
    <text x="504.3" y="490">+</text>
    <text x="547.6" y="489.5" font-weight="bold">-</text>
    <text x="578" y="528">+</text>
    <text x="578" y="570" font-weight="bold">-</text>
    <text x="412.4" y="616" font-weight="bold">-</text>
    <text x="450.5" y="616.5">+</text>
    <text x="388" y="652">+</text>
    <text x="388" y="694.5" font-weight="bold">-</text>
    <text x="511" y="614.5">+</text>
    <text x="547.6" y="613.5" font-weight="bold">-</text>
    <text x="584.6" y="645.5">+</text>
    <text x="584.6" y="688" font-weight="bold">-</text>
    </g>
  </svg>

</div>

<!--BOTTOM-START-->
<svg id="bottom" style="left:0;top:709px" width="1024" height="59" viewBox="0 709 1024 59">
<defs>
  <linearGradient id="gTask" x1="0" y1="0" x2="0" y2="1"><stop offset="0" stop-color="#1c3c8c"/><stop offset="0.025" stop-color="#1c3c8c"/><stop offset="0.045" stop-color="#8cc4fc"/><stop offset="0.1" stop-color="#7cc4e8"/><stop offset="0.2" stop-color="#7aa8ec"/><stop offset="0.3" stop-color="#5ca0e8"/><stop offset="0.5" stop-color="#5a94dc"/><stop offset="0.53" stop-color="#3c78cc"/><stop offset="0.7" stop-color="#3464c4"/><stop offset="0.9" stop-color="#2e56b4"/><stop offset="1" stop-color="#2444a0"/></linearGradient>
  <linearGradient id="gStart" x1="0" y1="0" x2="0" y2="1"><stop offset="0" stop-color="#1f5a2a"/><stop offset="0.03" stop-color="#c4eac4"/><stop offset="0.08" stop-color="#6cb86c"/><stop offset="0.3" stop-color="#4ea64e"/><stop offset="0.5" stop-color="#3a9c3a"/><stop offset="0.53" stop-color="#18b018"/><stop offset="0.8" stop-color="#14b414"/><stop offset="1" stop-color="#0e9c0e"/></linearGradient>
  <linearGradient id="gTB" x1="0" y1="0" x2="0" y2="1"><stop offset="0" stop-color="#8cc0f8"/><stop offset="0.12" stop-color="#6aa8ee"/><stop offset="0.48" stop-color="#5c98e4"/><stop offset="0.52" stop-color="#4280d6"/><stop offset="1" stop-color="#3466c6"/></linearGradient>
  <linearGradient id="gTBA" x1="0" y1="0" x2="0" y2="1"><stop offset="0" stop-color="#14307c"/><stop offset="0.15" stop-color="#1c4098"/><stop offset="1" stop-color="#2450b0"/></linearGradient>
  <linearGradient id="gTray" x1="0" y1="0" x2="0" y2="1"><stop offset="0" stop-color="#6a8cc8"/><stop offset="0.05" stop-color="#f6f8fd"/><stop offset="0.2" stop-color="#e4ecfa"/><stop offset="0.5" stop-color="#b9cef0"/><stop offset="0.8" stop-color="#8fb1e6"/><stop offset="1" stop-color="#7ea4e0"/></linearGradient>
  <radialGradient id="gCirc2" cx="0.5" cy="0.4" r="0.6"><stop offset="0" stop-color="#f2f5ff"/><stop offset="1" stop-color="#d5defa"/></radialGradient>
  <linearGradient id="gFF" x1="0" y1="0" x2="0" y2="1"><stop offset="0" stop-color="#f6a33a"/><stop offset="1" stop-color="#d8521a"/></linearGradient>
</defs>
<!-- status bar -->
<rect x="0" y="709" width="1024" height="29" fill="#f0f2f8"/>
<rect x="0" y="709" width="1024" height="1" fill="#d9d9de"/>
<rect x="0" y="710" width="1024" height="1.6" fill="#fbfbfd"/>
<rect x="217" y="712" width="600" height="26" fill="#efedf1"/>
<rect x="217" y="712" width="600" height="1" fill="#8d8d91"/>
<rect x="217" y="713" width="600" height="1" fill="#f9f9fb"/>
<text x="2.6" y="729.8" font-family="'Liberation Sans',sans-serif" font-size="12" fill="#1c1c24" textLength="32.4" lengthAdjust="spacingAndGlyphs">Ready</text>
<!-- page nav -->
<g>
  <circle cx="227.9" cy="724.8" r="6.6" fill="url(#gCirc2)" stroke="#9f9bba" stroke-width="1.1"/>
  <path d="M225.9 721.6 H229.9 V722.8 H225.9 Z M225.3 727.8 H230.5 L227.9 723.8 Z" fill="#53679f"/>
  <circle cx="251" cy="724.8" r="6.6" fill="url(#gCirc2)" stroke="#9f9bba" stroke-width="1.1"/>
  <path d="M248.3 727 H253.7 L251 722.6 Z" fill="#53679f"/>
  <rect x="265" y="718" width="105" height="18" fill="#fff"/>
  <text x="269.4" y="730.8" font-family="'Liberation Sans',sans-serif" font-size="12.5" fill="#000" textLength="33" lengthAdjust="spacingAndGlyphs">5 / 16</text>
  <rect x="357" y="720" width="12" height="14" fill="#c8d4e5"/>
  <path d="M359.4 724.6 L362.9 728.4 L366.4 724.6" fill="none" stroke="#2f3f5f" stroke-width="1.9"/>
  <circle cx="384" cy="724.8" r="6.6" fill="url(#gCirc2)" stroke="#9f9bba" stroke-width="1.1"/>
  <path d="M381.3 722.8 H386.7 L384 727.2 Z" fill="#53679f"/>
  <circle cx="407" cy="724.8" r="6.6" fill="url(#gCirc2)" stroke="#9f9bba" stroke-width="1.1"/>
  <path d="M404.4 721.8 H409.6 L407 725.8 Z M405 726.8 H409 V728 H405 Z" fill="#53679f"/>
  <rect x="422" y="715" width="1.2" height="18.5" fill="#8f8f93"/>
  <path d="M429 724.8 L434.6 720.2 V722.7 H442.2 V726.9 H434.6 V729.4 Z" fill="#d9d9db" stroke="#b5b5b9" stroke-width="0.9" stroke-linejoin="round"/>
  <path d="M465 724.8 L459.4 720.2 V722.7 H452.6 V726.9 H459.4 V729.4 Z" fill="#d9d9db" stroke="#b5b5b9" stroke-width="0.9" stroke-linejoin="round"/>
  <rect x="474" y="715" width="1.2" height="18.5" fill="#8f8f93"/>
  <rect x="479" y="718" width="94.8" height="18" fill="#fff"/>
  <text x="483.5" y="730.8" font-family="'Liberation Sans',sans-serif" font-size="12.5" fill="#000" textLength="31.8" lengthAdjust="spacingAndGlyphs">100%</text>
  <rect x="560.6" y="720" width="12.4" height="14" fill="#c8d4e5"/>
  <path d="M563.2 724.6 L566.8 728.4 L570.4 724.6" fill="none" stroke="#2f3f5f" stroke-width="1.9"/>
</g>
<!-- layout icons -->
<g>
  <rect x="605.2" y="717.4" width="11" height="14.8" fill="#fbfcff" stroke="#a9b3da" stroke-width="0.8"/>
  <path d="M605.2 717.8 V732.2 H616" fill="none" stroke="#58669f" stroke-width="1.2"/>
  <path d="M607 720 H615 M607 722 H615 M607 724 H615 M607 726 H615 M607 728 H615 M607 730 H615" stroke="#b9c6ec" stroke-width="0.8"/>
  <rect x="624.3" y="714.8" width="18.6" height="19.1" rx="1.5" fill="#b7a7dc"/>
  <rect x="628.7" y="716.8" width="10.8" height="5.8" fill="#fbfcff" stroke="#8d82b8" stroke-width="0.6"/>
  <rect x="628.7" y="726" width="10.8" height="6" fill="#fbfcff" stroke="#8d82b8" stroke-width="0.6"/>
  <path d="M630.4 718.8 H637.8 M630.4 720.6 H637.8 M630.4 728.2 H637.8 M630.4 730 H637.8" stroke="#8e9cd0" stroke-width="0.8"/>
  <g fill="#fbfcff" stroke="#6a78b0" stroke-width="0.8">
    <rect x="650.4" y="717.2" width="5.6" height="5.6"/><rect x="658.6" y="717.2" width="5.6" height="5.6"/>
    <rect x="650.4" y="725.8" width="5.6" height="6.2"/><rect x="658.6" y="725.8" width="5.6" height="6.2"/>
  </g>
  <path d="M651.6 719.2 H654.8 M651.6 721 H654.8 M659.8 719.2 H663 M659.8 721 H663 M651.6 728 H654.8 M651.6 730 H654.8 M659.8 728 H663 M659.8 730 H663" stroke="#a9b6e0" stroke-width="0.7"/>
  <g fill="#fbfcff" stroke="#6a78b0" stroke-width="0.9">
    <rect x="673.3" y="717.2" width="5.8" height="15.2"/><rect x="681.9" y="717.2" width="5.8" height="15.2"/>
  </g>
  <path d="M674.6 720 H677.8 M674.6 722.4 H677.8 M674.6 724.8 H677.8 M674.6 727.2 H677.8 M674.6 729.6 H677.8 M683.2 720 H686.4 M683.2 722.4 H686.4 M683.2 724.8 H686.4 M683.2 727.2 H686.4 M683.2 729.6 H686.4" stroke="#9fb0e0" stroke-width="0.8"/>
</g>
<text x="820" y="730" font-family="'Liberation Sans',sans-serif" font-size="12" fill="#1c1c24" textLength="123.2" lengthAdjust="spacingAndGlyphs">Size: [8.50 * 11.00 in]</text>

<!-- taskbar -->
<rect x="0" y="738" width="1024" height="30" fill="url(#gTask)"/>
<!-- start button -->
<path d="M0 738.4 H82 C92 738.4 97.4 748 97.4 768 H0 Z" fill="url(#gStart)"/>
<path d="M0 739.2 H82 C90 739.2 95.6 745 96.6 758" fill="none" stroke="#9ad89a" stroke-width="1" opacity="0.7"/>
<path d="M86 739.4 C93 741.5 96.4 749 96.6 762" fill="none" stroke="#bfe6bf" stroke-width="0.9" opacity="0.8"/>
<path d="M98.2 746 C99 752 99.2 760 99.2 768" fill="none" stroke="#1c3c8c" stroke-width="1.6" opacity="0.45"/>
<!-- windows flag -->
<g>
  <path d="M12.6 745 C15 743.4 17.6 743.6 20 745.2 L18.6 752.4 C16.2 751 13.8 751 11.4 752.4 Z" fill="#e6552a"/>
  <path d="M21 745.8 C23.4 747.4 26 747.2 28.6 745.6 L27.2 753 C24.8 754.4 22.2 754.4 19.8 753 Z" fill="#7cc43c"/>
  <path d="M11.2 753.4 C13.6 752 16 752 18.4 753.4 L17.2 760.2 C14.8 758.8 12.4 758.8 10.2 760.2 Z" fill="#4c80e6"/>
  <path d="M19.6 754 C22 755.4 24.6 755.4 27 754 L25.8 760.6 C23.4 762 20.8 762 18.4 760.6 Z" fill="#f6c22c"/>
</g>
<text x="35.4" y="759.6" font-family="'Liberation Sans',sans-serif" font-style="italic" font-weight="bold" font-size="18" fill="#1a4a1a" opacity="0.6" textLength="38" lengthAdjust="spacingAndGlyphs">start</text>
<text x="34.8" y="758.9" font-family="'Liberation Sans',sans-serif" font-style="italic" font-weight="bold" font-size="18" fill="#fff" textLength="38" lengthAdjust="spacingAndGlyphs">start</text>
<!-- quick launch -->
<g>
  <text x="109.8" y="760.4" font-family="'Liberation Sans',sans-serif" font-weight="bold" font-size="21" fill="#2a9cf6" stroke="#1f86e6" stroke-width="1.3">e</text>
  <path d="M113 753.4 H121.8" stroke="#bfe6ff" stroke-width="1.2"/>
  <path d="M110.2 759.6 C107.6 757.6 111.4 750.8 117.6 747.4 C121.4 745.2 124.6 745 125 746.6" fill="none" stroke="#f2c638" stroke-width="1.7" stroke-linecap="round"/>
  <g id="ffx">
    <circle cx="139.7" cy="752.7" r="8.1" fill="url(#gFF)"/>
    <circle cx="141.3" cy="749.9" r="4.7" fill="#2f7fcc"/>
    <circle cx="141.2" cy="747.6" r="1.7" fill="#b4dcf8"/>
    <path d="M132 749.6 C133.4 746 136.5 744.7 139.2 745.2 C137.7 746.6 138 748 139.5 748.8 C141.1 749.6 141.7 751.3 140.5 752.9 C139.1 754.5 136.4 754.1 135.4 752.4 C134.6 754.6 136.2 757.2 139.2 757.7 C134.8 758.4 131.2 754.8 132 749.6 Z" fill="#ee7a1c"/>
    <path d="M146.7 748.6 C148.5 752.6 146.8 757.6 142.6 759.7" fill="none" stroke="#f8c22a" stroke-width="1.5" stroke-linecap="round"/>
    <circle cx="139.6" cy="748.2" r="0.8" fill="#222"/>
  </g>
  <rect x="155.5" y="747.6" width="15.2" height="11.8" fill="#3a6cd4" stroke="#cddbf2" stroke-width="1"/>
  <path d="M156 748.1 H170.2 V752 C165 750 160 751 156 755 Z" fill="#5c8ce2" opacity="0.7"/>
  <rect x="156" y="756.4" width="14.2" height="2.4" fill="#2a3858"/>
  <rect x="157.6" y="756" width="2.4" height="2.4" fill="#e8f0d8"/>
  <path d="M200 745.2 L202.6 747.7 L200 750.2 M204.6 745.2 L207.2 747.7 L204.6 750.2" fill="none" stroke="#fff" stroke-width="1.5"/>
</g>
<!-- task buttons -->
<g>
  <rect x="218.5" y="742.4" width="157" height="22.6" rx="2.5" fill="url(#gTB)" stroke="#2a5cc4" stroke-width="0.9"/>
  <path d="M220 743.4 H374" stroke="#7fb0f6" stroke-width="1" opacity="0.8"/>
  <path d="M228 746 L233.6 744.8 V760.6 L228 761.4 Z" fill="#f2d048"/>
  <path d="M233.6 744.8 L240.4 746.2 V760.2 L233.6 760.6 Z" fill="#f9e27c"/>
  <path d="M236 748 L240.4 746.2 V760.2 L236 761.4 Z" fill="#e6bc38"/>
  <text x="246.5" y="757" font-family="'Liberation Sans',sans-serif" font-size="11.5" fill="#fff" textLength="53.6" lengthAdjust="spacingAndGlyphs">New Folder</text>

  <rect x="378.4" y="742.4" width="157.2" height="22.6" rx="2.5" fill="url(#gTB)" stroke="#2a5cc4" stroke-width="0.9"/>
  <path d="M380 743.4 H534" stroke="#7fb0f6" stroke-width="1" opacity="0.8"/>
  <use href="#ffx" x="255.3" y="-0.1"/>
  <text x="407.4" y="757" font-family="'Liberation Sans',sans-serif" font-size="11.5" fill="#fff" textLength="108.8" lengthAdjust="spacingAndGlyphs">Tahmid's blog: Febru…</text>

  <rect x="538" y="741.8" width="157.6" height="23.4" rx="2.5" fill="url(#gTBA)" stroke="#153684" stroke-width="1"/>
  <rect x="548.5" y="746" width="13.6" height="13.6" fill="#fff" stroke="#8a96b8" stroke-width="0.9"/>
  <path d="M549.3 756.2 C554 756.2 558.6 752.4 560.2 746.8 L561.6 746.8 L561.6 751.2 C559.6 755.8 554.6 759.2 549.6 758.9 Z" fill="url(#gOr)"/>
  <path d="M549.4 752 C551.6 751 554 749.6 555.6 747" fill="none" stroke="#7890c8" stroke-width="1.1"/>
  <text x="567.4" y="757" font-family="'Liberation Sans',sans-serif" font-size="11.5" fill="#fff" textLength="113.4" lengthAdjust="spacingAndGlyphs">co ban ve tinh toan B…</text>
</g>
<!-- tray -->
<rect x="913" y="738" width="111" height="30" fill="url(#gTray)"/>
<rect x="912.4" y="738.6" width="1" height="29.4" fill="#5a7cc0" opacity="0.7"/>
<circle cx="912.9" cy="752.9" r="7.9" fill="#e6eefb" stroke="#9db6e2" stroke-width="1.3"/>
<circle cx="912.9" cy="751.6" r="5.6" fill="#f8faff" opacity="0.8"/>
<path d="M914.9 749 L910.7 752.9 L914.9 756.8" fill="none" stroke="#2c4c84" stroke-width="1.7"/>
<g>
  <rect x="925.6" y="747.4" width="8.6" height="6.6" fill="#3a4a6c"/>
  <rect x="926.8" y="755.2" width="6.4" height="1.6" fill="#3a4a6c"/>
  <rect x="925.4" y="757" width="8" height="1.6" fill="#e8eefc" stroke="#3a4a6c" stroke-width="0.6"/>
  <path d="M934.8 750.4 C935.8 749.4 935.8 747.8 934.8 746.8 M936.6 751.6 C938.2 750 938.2 747 936.6 745.4 M938.6 752.6 C940.6 750.4 940.6 746.6 938.6 744.6" fill="none" stroke="#e8f0ff" stroke-width="0.9"/>
</g>
<g>
  <rect x="942.2" y="745.4" width="15" height="14.2" fill="#f0fff0"/>
  <rect x="942.2" y="745.4" width="7" height="5" fill="#4aa84a"/>
  <path d="M944.6 757.6 V755.4 M947.6 757.6 V753 M950.6 757.6 V750.4 M953.8 757.6 V747" stroke="#18b018" stroke-width="2.2"/>
  <rect x="942.6" y="757.8" width="14.2" height="1.4" fill="#0a2a0a"/>
</g>
<text x="966" y="756.4" font-family="'Liberation Sans',sans-serif" font-size="11.5" fill="#16233f" textLength="44.4" lengthAdjust="spacingAndGlyphs">11:53 AM</text>
</svg>
<!--BOTTOM-END-->

</div>
</body>
</html>
